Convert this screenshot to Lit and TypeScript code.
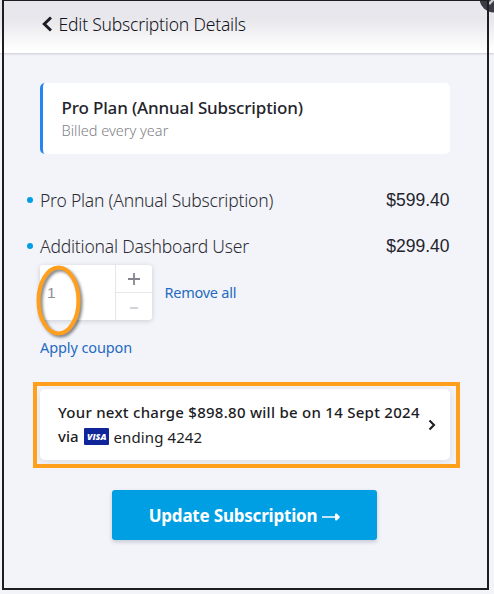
import { LitElement, html, css } from "lit";
import { customElement, state } from "lit/decorators.js";

@customElement("quantity-stepper")
class QuantityStepper extends LitElement {
  @state() private count = 1;

  static styles = css`
    :host { display: block; width: 112px; height: 55px; }
    .box {
      display: grid; grid-template-columns: 75px 1fr; height: 100%;
      background: #fff; border-radius: 3px; overflow: hidden;
      box-shadow: 0 1px 5px rgba(40, 45, 70, 0.2);
    }
    .value { padding-left: 7px; font: 15.5px/56px "Liberation Sans", sans-serif; color: #8f8f98; }
    .steps { display: grid; grid-template-rows: 27px 28px; border-left: 1px solid #e7e7ea; }
    button { border: 0; padding: 0; background: none; display: grid; place-items: center; }
    .minus { border-top: 1px solid #e7e7ea; }
    svg { display: block; }
  `;

  render() {
    return html`<div class="box">
      <div class="value">${this.count}</div>
      <div class="steps">
        <button aria-label="Increase" @click=${() => this.count++}>
          <svg width="12" height="12" viewBox="0 0 12 12" fill="none" stroke="#85858f" stroke-width="1.8"><path d="M0 6H12M6 0V12" /></svg>
        </button>
        <button class="minus" aria-label="Decrease" @click=${() => (this.count = Math.max(1, this.count - 1))}>
          <svg width="8" height="6" viewBox="0 0 8 6"><path d="M0 3H8V5H0Z" fill="#d2d2d8" /></svg>
        </button>
      </div>
    </div>`;
  }
}

@customElement("app-root")
class AppRoot extends LitElement {
  static styles = css`
    :host {
      display: block; position: relative; width: 494px; height: 594px; overflow: hidden;
      background: #f3f4f9; color: #24242c; font-family: "Noto Sans", "Open Sans", sans-serif;
    }
    * { box-sizing: border-box; }
    svg { display: block; flex: none; }
    .t { white-space: nowrap; }
    header {
      display: flex; align-items: center; gap: 6.5px; height: 53px; padding: 0 0 5px 42px;
      background: linear-gradient(#e7e6ed 0, #e7e7ec 35%, #fff 96%);
      box-shadow: 0 1px 2px rgba(30, 30, 50, 0.18);
    }
    .title { font-size: 17.5px; font-weight: 300; letter-spacing: -0.2px; color: #14141c; }
    main { padding: 30px 44px 0 40px; }
    .plan {
      height: 71px; padding: 12px 0 0 18.5px; background: #fff;
      border-left: 3px solid #2684f5; border-radius: 5px;
    }
    .name { font-size: 17px; line-height: 25px; font-weight: 500; letter-spacing: -0.15px; }
    .cycle { font-size: 14.5px; line-height: 21px; font-weight: 300; color: #808086; }
    .row { display: flex; align-items: center; height: 46px; margin-left: -13px; }
    .row.first { margin-top: 23px; }
    .dot { width: 6px; height: 6px; border-radius: 50%; background: #009fe3; margin: 0 7px 0 0; }
    .label { font-size: 17.5px; font-weight: 300; letter-spacing: -0.21px; color: #2c2c34; flex: 1; }
    .price { font: 17.5px "Liberation Sans", sans-serif; margin-right: 0.5px; }
    .quantity { display: flex; align-items: center; gap: 12.5px; margin-top: -4px; }
    .link { font-size: 14.5px; line-height: 20px; letter-spacing: -0.1px; color: #246bc0; }
    .quantity .link { letter-spacing: -0.25px; margin-top: -1px; }
    .coupon { margin-top: 17px; height: 20px; }
    .charge {
      display: flex; align-items: center; height: 71px; margin-top: 32px; padding: 0 14px 0 18px;
      background: #fff; border-radius: 5px; box-shadow: 0 2px 8px rgba(30, 35, 70, 0.11);
    }
    .message { flex: 1; font-size: 15px; line-height: 24px; margin-top: -2px; font-weight: 500; color: #1c1c24; }
    .m1 { letter-spacing: 0.27px; }
    .line { display: flex; align-items: center; }
    .visa { margin: 1px 5px 0 5px; }
    .ending { font-weight: 400; letter-spacing: 0.1px; position: relative; top: 1px; }
    .update {
      display: flex; align-items: center; justify-content: center; gap: 5px;
      width: 265px; height: 50px; margin: 30px 0 0 72px; padding: 0; border: 0; border-radius: 3px;
      background: #009fe3; box-shadow: 0 2px 4px rgba(20, 30, 60, 0.2);
      font: bold 17px "Noto Sans", sans-serif; letter-spacing: -0.2px; color: #fff;
    }
    .update svg { margin-top: 3px; }
    .frame {
      position: absolute; left: 2px; top: -1px; width: 487px; height: 591px;
      border: 2px solid #1e1e20; pointer-events: none;
    }
    .outline {
      position: absolute; left: 33px; top: 382px; width: 427px; height: 86px;
      border: 4px solid #ff9f1c; pointer-events: none;
    }
    .ring {
      position: absolute; left: 36px; top: 265px; overflow: visible; pointer-events: none;
      filter: drop-shadow(2px 2px 1.5px rgba(0, 0, 0, 0.5));
    }
    .corner { position: absolute; left: 480px; top: 0; }
  `;

  render() {
    return html`
      <header>
        <svg width="10" height="16" viewBox="0 0 10 16" fill="none" stroke="#1c1c24" stroke-width="3"><path d="M9 1.5L2.3 8L9 14.5" /></svg>
        <span class="t title">Edit Subscription Details</span>
      </header>
      <main>
        <section class="plan">
          <div class="name"><span class="t">Pro Plan (Annual Subscription)</span></div>
          <div class="cycle"><span class="t">Billed every year</span></div>
        </section>
        <div class="row first">
          <i class="dot"></i><div class="label"><span class="t">Pro Plan (Annual Subscription)</span></div><span class="price">$599.40</span>
        </div>
        <div class="row">
          <i class="dot"></i><div class="label"><span class="t">Additional Dashboard User</span></div><span class="price">$299.40</span>
        </div>
        <div class="quantity"><quantity-stepper></quantity-stepper><span class="t link">Remove all</span></div>
        <div class="coupon link"><span class="t">Apply coupon</span></div>
        <section class="charge">
          <div class="message">
            <div class="line"><span class="t m1">Your next charge $898.80 will be on 14 Sept 2024</span></div>
            <div class="line">
              <span class="t">via</span>
              <svg class="visa" width="25" height="17" viewBox="0 0 25 17">
                <rect width="25" height="17" rx="1" fill="#10259a" />
                <text x="3" y="12" textLength="19.5" lengthAdjust="spacingAndGlyphs" fill="#fff" font-family="Open Sans, sans-serif" font-size="9.5" font-weight="800" font-style="italic">VISA</text>
              </svg>
              <span class="t ending">ending 4242</span>
            </div>
          </div>
          <svg width="8" height="12" viewBox="0 0 8 12" fill="none" stroke="#1c1c24" stroke-width="2.1"><path d="M1.5 1.5L6 6L1.5 10.5" /></svg>
        </section>
        <button class="update">
          <span class="t">Update Subscription</span>
          <svg width="18" height="8" viewBox="0 0 18 8" fill="#fff"><path d="M0 3.2H13V1.4Q13.2 0 14.6 .6L17.3 3Q18.2 4 17.3 5L14.6 7.4Q13.2 8 13 6.6V4.8H0Z" /></svg>
        </button>
      </main>
      <svg class="corner" width="14" height="14" viewBox="0 0 14 14">
        <circle cx="14" cy="-2" r="14.5" fill="#3b3b45" />
        <path d="M9 4L14 -1" stroke="#c9c9d0" stroke-width="2.5" />
      </svg>
      <svg class="ring" width="46" height="72" viewBox="0 0 46 72">
        <ellipse cx="22.5" cy="35.5" rx="20" ry="33" fill="none" stroke="#ff9f1c" stroke-width="4" />
      </svg>
      <div class="outline"></div>
      <div class="frame"></div>
    `;
  }
}
